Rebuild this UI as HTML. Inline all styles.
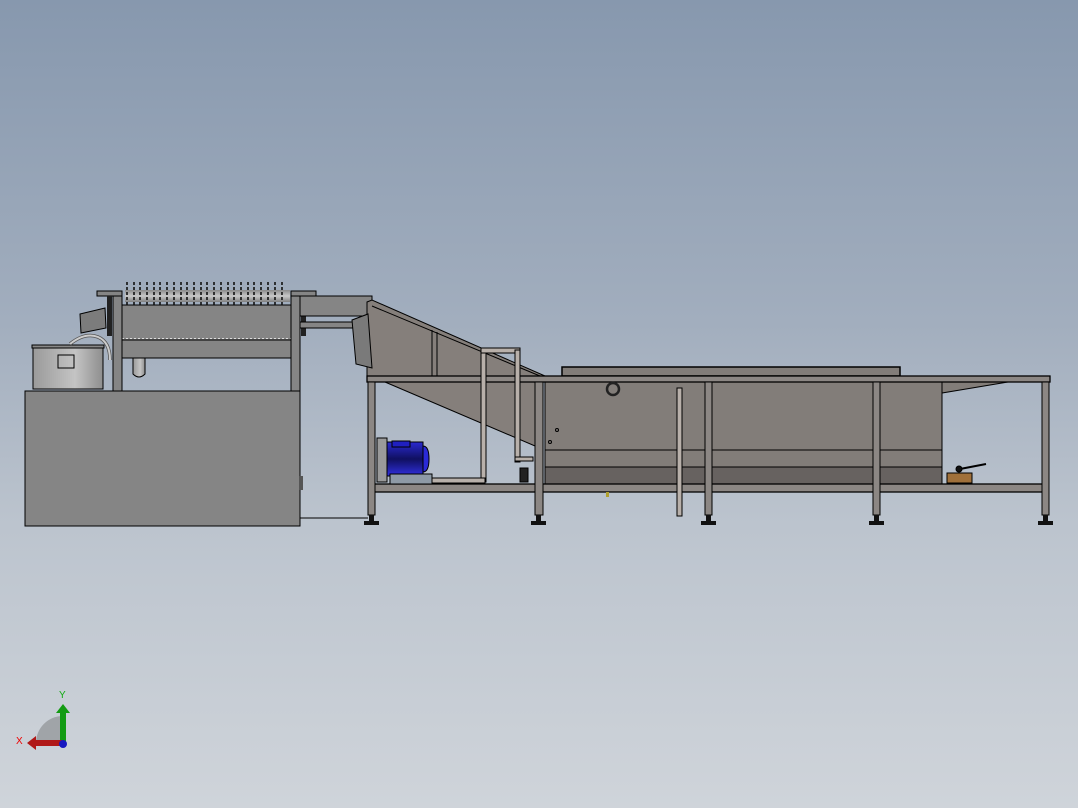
<!DOCTYPE html>
<html><head><meta charset="utf-8"><style>
html,body{margin:0;padding:0;width:1078px;height:808px;overflow:hidden}
body{background:linear-gradient(#8798ae 0%,#a2aebe 40%,#bcc4ce 65%,#cfd4da 100%)}
svg{position:absolute;left:0;top:0}
</style></head><body>
<svg width="1078" height="808" viewBox="0 0 1078 808" xmlns="http://www.w3.org/2000/svg">
<defs>
<linearGradient id="tank" x1="0" x2="1"><stop offset="0" stop-color="#9a9a9a"/><stop offset=".6" stop-color="#c4c4c4"/><stop offset="1" stop-color="#8e8e8e"/></linearGradient>
<linearGradient id="bar" x1="0" y1="0" x2="0" y2="1"><stop offset="0" stop-color="#8a8a8a"/><stop offset=".5" stop-color="#c8c8c8"/><stop offset="1" stop-color="#808080"/></linearGradient>
<linearGradient id="mot" x1="0" y1="0" x2="0" y2="1"><stop offset="0" stop-color="#2a2ad0"/><stop offset=".5" stop-color="#101060"/><stop offset="1" stop-color="#3030e0"/></linearGradient>
</defs>
<g stroke="#000" stroke-width="1">
<rect x="25" y="391" width="275" height="135" fill="#858585"/>
<polyline points="300,518 368,518" fill="none"/>
<rect x="299" y="476" width="4" height="14" fill="#555" stroke="none"/>
<rect x="33" y="347" width="70" height="42" fill="url(#tank)"/>
<rect x="32" y="345" width="72" height="3" fill="#888"/>
<rect x="58" y="355" width="16" height="13" fill="none"/>
<path d="M70 344 Q85 332 98 337 Q110 342 110 360" fill="none" stroke="#555" stroke-width="3.5"/>
<path d="M70 344 Q85 332 98 337 Q110 342 110 360" fill="none" stroke="#ccc" stroke-width="2"/>
<rect x="122" y="305" width="169" height="35" fill="#858585"/>
<rect x="122" y="340" width="169" height="18" fill="#858585"/>
<line x1="122" y1="338.5" x2="291" y2="338.5" stroke="#ddd" stroke-dasharray="2 2"/>
<path d="M133 358 v16 q6 6 12 0 v-16z" fill="url(#tank)"/>
<polygon points="80,314 105,308 106,328 81,333" fill="#7c7c7c"/>
<rect x="125" y="290" width="165" height="12" fill="url(#bar)" stroke="none"/>
<rect x="113" y="296" width="9" height="95" fill="#858585"/>
<rect x="291" y="296" width="9" height="95" fill="#858585"/>
<rect x="97" y="291" width="25" height="5" fill="#858585"/>
<rect x="291" y="291" width="25" height="5" fill="#858585"/>
<rect x="107" y="296" width="5" height="40" fill="#222" stroke="none"/>
<rect x="301" y="296" width="5" height="40" fill="#222" stroke="none"/>
<rect x="300" y="296" width="72" height="20" fill="#858585"/>
<rect x="300" y="322" width="60" height="6" fill="#858585"/>
<polygon points="367,302 372,300 545,376 545,382 367,382" fill="#857f7b"/>
<line x1="372" y1="306" x2="540" y2="376"/>
<line x1="432" y1="330" x2="432" y2="382"/>
<line x1="437" y1="332" x2="437" y2="382"/>
<polygon points="352,320 368,314 372,368 356,364" fill="#7a7a7a"/>
<polygon points="385,382 535,382 535,446" fill="#857f7b"/>
<rect x="562" y="367" width="338" height="9" fill="#827d79" stroke-width="1.5"/>
<rect x="545" y="382" width="397" height="85" fill="#827d79"/>
<rect x="545" y="467" width="397" height="17" fill="#676260"/>
<line x1="545" y1="450" x2="942" y2="450"/>
<polygon points="942,382 1008,382 942,393" fill="#827d79"/>
<rect x="367" y="376" width="683" height="6" fill="#8c8784" stroke-width="1.3"/>
<rect x="372" y="484" width="671" height="8" fill="#8c8784" stroke-width="1.3"/>
<g fill="#8c8784">
<rect x="368" y="382" width="7" height="133"/>
<rect x="535" y="382" width="8" height="133"/>
<rect x="705" y="382" width="7" height="133"/>
<rect x="873" y="382" width="7" height="133"/>
<rect x="1042" y="382" width="7" height="133"/>
</g>
<g fill="#111" stroke="none">
<rect x="369" y="515" width="5" height="6"/><rect x="364" y="521" width="15" height="4"/>
<rect x="536" y="515" width="5" height="6"/><rect x="531" y="521" width="15" height="4"/>
<rect x="706" y="515" width="5" height="6"/><rect x="701" y="521" width="15" height="4"/>
<rect x="874" y="515" width="5" height="6"/><rect x="869" y="521" width="15" height="4"/>
<rect x="1043" y="515" width="5" height="6"/><rect x="1038" y="521" width="15" height="4"/>
</g>
<g fill="#b8b0aa">
<rect x="481" y="350" width="5" height="132"/>
<rect x="481" y="348" width="39" height="5"/>
<rect x="515" y="350" width="5" height="112"/>
<rect x="515" y="457" width="18" height="4"/>
<rect x="430" y="478" width="55" height="5"/>
<rect x="677" y="388" width="5" height="128"/>
</g>
<circle cx="613" cy="389" r="6" fill="none" stroke="#222" stroke-width="2.5"/>
<rect x="520" y="468" width="8" height="14" fill="#222"/>
<circle cx="557" cy="430" r="1.5" fill="none"/><circle cx="550" cy="442" r="1.5" fill="none"/>
<rect x="377" y="438" width="10" height="44" fill="#9a9a9a"/>
<rect x="387" y="442" width="36" height="34" fill="url(#mot)"/>
<path d="M423 446 q6 0 6 13 q0 13 -6 13z" fill="#2a2ad8"/>
<rect x="392" y="441" width="18" height="6" fill="#2020c0"/>
<rect x="390" y="474" width="42" height="10" fill="#8e9aa6"/>
<rect x="947" y="473" width="25" height="10" fill="#a0703a"/>
<line x1="960" y1="469" x2="986" y2="464" stroke-width="2"/>
<circle cx="959" cy="469" r="3" fill="#111"/>
<rect x="606" y="492" width="3" height="5" fill="#b0a030" stroke="none"/>
</g>
<g stroke="#111" stroke-width="1.6" stroke-dasharray="3 2">
<line x1="127" y1="282" x2="127" y2="306"/><line x1="134" y1="282" x2="134" y2="306"/><line x1="140" y1="282" x2="140" y2="306"/><line x1="147" y1="282" x2="147" y2="306"/><line x1="154" y1="282" x2="154" y2="306"/><line x1="160" y1="282" x2="160" y2="306"/><line x1="167" y1="282" x2="167" y2="306"/><line x1="174" y1="282" x2="174" y2="306"/><line x1="181" y1="282" x2="181" y2="306"/><line x1="187" y1="282" x2="187" y2="306"/><line x1="194" y1="282" x2="194" y2="306"/><line x1="201" y1="282" x2="201" y2="306"/><line x1="207" y1="282" x2="207" y2="306"/><line x1="214" y1="282" x2="214" y2="306"/><line x1="221" y1="282" x2="221" y2="306"/><line x1="228" y1="282" x2="228" y2="306"/><line x1="234" y1="282" x2="234" y2="306"/><line x1="241" y1="282" x2="241" y2="306"/><line x1="248" y1="282" x2="248" y2="306"/><line x1="254" y1="282" x2="254" y2="306"/><line x1="261" y1="282" x2="261" y2="306"/><line x1="268" y1="282" x2="268" y2="306"/><line x1="275" y1="282" x2="275" y2="306"/><line x1="282" y1="282" x2="282" y2="306"/>
</g>
<path d="M63 743 L36 743 A27 27 0 0 1 63 716 Z" fill="#a0a4a8"/>
<rect x="60" y="712" width="6" height="32" fill="#139b13"/>
<polygon points="56,713 63,704 70,713" fill="#139b13"/>
<rect x="35" y="740" width="28" height="6" fill="#b01818"/>
<polygon points="36,736 27,743 36,750" fill="#b01818"/>
<circle cx="63" cy="744" r="4" fill="#1818c0"/>
<text x="59" y="698" font-family="Liberation Sans,sans-serif" font-size="10" fill="#1a1">Y</text>
<text x="16" y="744" font-family="Liberation Sans,sans-serif" font-size="10" fill="#e00">X</text>
</svg>
</body></html>
